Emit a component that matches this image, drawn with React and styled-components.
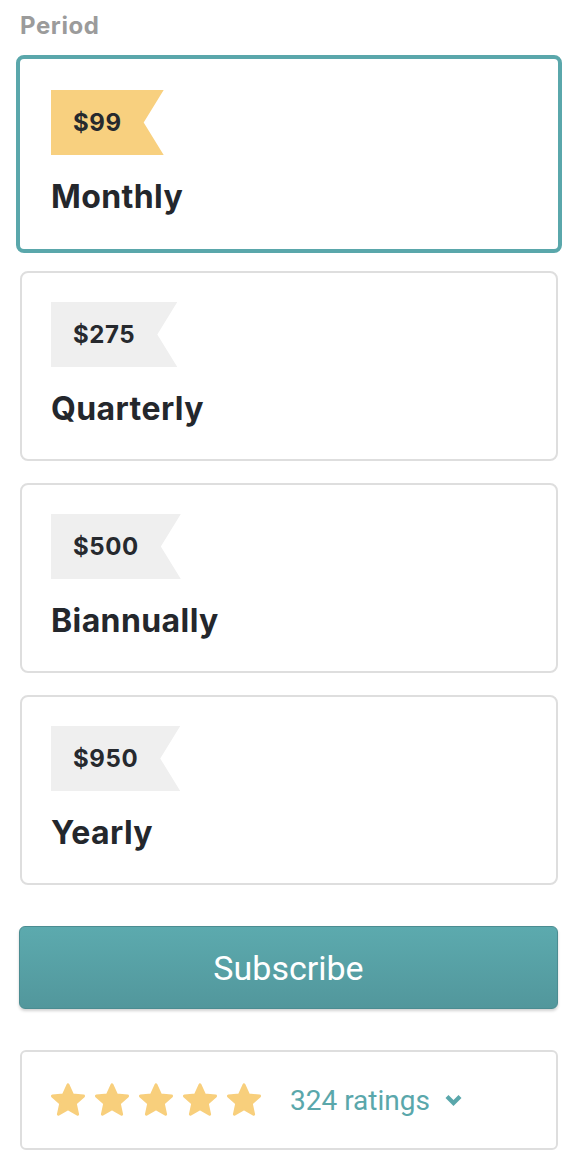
import React, { useState } from 'react';
import styled, { createGlobalStyle } from 'styled-components';

const GlobalStyle = createGlobalStyle`
  body {
    margin: 0;
    background: #fff;
    font-family: 'Inter', 'Noto Sans', sans-serif;
  }
`;

const Page = styled.div`
  padding: 11px 22px 20px 20px;
  display: flex;
  flex-direction: column;
`;

const Label = styled.div`
  font-size: 24px;
  line-height: 29px;
  font-weight: 700;
  color: #9b9b9b;
  letter-spacing: 0.6px;
  margin-bottom: 19px;
`;

const Options = styled.div`
  display: flex;
  flex-direction: column;
  gap: 22px;
`;

const Card = styled.div`
  display: flex;
  flex-direction: column;
  align-items: flex-start;
  background: #fff;
  border-radius: 8px;
  cursor: pointer;
  border: ${p => (p.$active ? '4px solid #5aa7ab' : '2px solid #dedede')};
  padding: ${p => (p.$active ? '31px' : '29px')};
  padding-bottom: ${p => (p.$active ? '34px' : '32px')};
  margin: ${p => (p.$active ? '-4px' : '0')};
`;

const Badge = styled.div`
  height: 65px;
  display: flex;
  align-items: center;
  padding: 0 42px 0 22px;
  background: ${p => (p.$active ? '#f8d07f' : '#efefef')};
  clip-path: polygon(0 0, 100% 0, calc(100% - 20px) 50%, 100% 100%, 0 100%);
  font-size: 24px;
  font-weight: 700;
  color: #26292e;
  letter-spacing: 0.6px;
`;

const Title = styled.div`
  margin-top: 23px;
  font-size: 32px;
  line-height: 37px;
  font-weight: 700;
  color: #24272c;
  letter-spacing: 0.4px;
`;

const SubscribeButton = styled.button`
  margin-top: 41px;
  margin-left: -1px;
  height: 83px;
  border: 1px solid #4b8c91;
  border-radius: 6px;
  background: linear-gradient(to bottom, #5caaae, #52979c);
  box-shadow: 0 2px 3px rgba(0, 0, 0, 0.18);
  color: #fff;
  font-family: 'Roboto', 'Inter', sans-serif;
  font-size: 34px;
  font-weight: 400;
  cursor: pointer;
`;

const RatingBox = styled.div`
  margin-top: 41px;
  display: flex;
  align-items: center;
  border: 2px solid #dedede;
  border-radius: 6px;
  padding: 31px 29px;
`;

const Stars = styled.div`
  display: flex;
  gap: 10px;
`;

const RatingLink = styled.a`
  margin-left: 29px;
  display: flex;
  align-items: center;
  gap: 15px;
  color: #5aa7ab;
  font-family: 'Roboto', 'Inter', sans-serif;
  font-size: 28px;
  text-decoration: none;
  cursor: pointer;
`;

const plans = [
  { price: '$99', name: 'Monthly' },
  { price: '$275', name: 'Quarterly' },
  { price: '$500', name: 'Biannually' },
  { price: '$950', name: 'Yearly' },
];

const Star = () => (
  <svg width="34" height="34" viewBox="1.7 1.5 20.6 20.6">
    <path
      d="M12 2.6l2.75 6.1 6.65.7-4.98 4.5 1.4 6.55L12 17.1l-5.82 3.35 1.4-6.55L2.6 9.4l6.65-.7z"
      fill="#f8cf7c"
      stroke="#f8cf7c"
      strokeWidth="1.8"
      strokeLinejoin="round"
    />
  </svg>
);

const Chevron = () => (
  <svg width="17" height="12" viewBox="0 0 17 12">
    <polyline points="2,2.5 8.5,9 15,2.5" fill="none" stroke="#5aa7ab" strokeWidth="4.2" />
  </svg>
);

const App = () => {
  const [selected, setSelected] = useState(0);

  return (
    <Page>
      <GlobalStyle />
      <Label>Period</Label>
      <Options>
        {plans.map((plan, i) => (
          <Card key={plan.name} $active={selected === i} onClick={() => setSelected(i)}>
            <Badge $active={selected === i}>{plan.price}</Badge>
            <Title>{plan.name}</Title>
          </Card>
        ))}
      </Options>
      <SubscribeButton>Subscribe</SubscribeButton>
      <RatingBox>
        <Stars>
          {[0, 1, 2, 3, 4].map(n => (
            <Star key={n} />
          ))}
        </Stars>
        <RatingLink>
          324 ratings
          <Chevron />
        </RatingLink>
      </RatingBox>
    </Page>
  );
};

export default App;
